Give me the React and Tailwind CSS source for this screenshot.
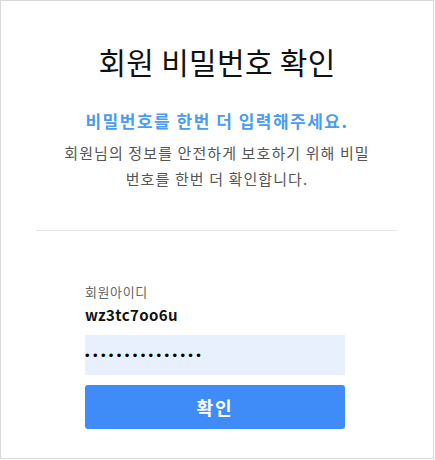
const fontStack = { fontFamily: '"Noto Sans CJK KR", "Noto Sans", sans-serif' };

export default function App() {
  return (
    <div
      className="w-[434px] h-[459px] border border-[#d9d9d9] bg-white"
      style={fontStack}
    >
      <div className="pt-[38px] text-center">
        <h1 className="text-[30px] leading-[44px] font-normal tracking-[0.3px] text-[#111]">회원 비밀번호 확인</h1>
        <p className="mt-[25px] text-[17px] leading-[26px] font-bold tracking-[1.5px] text-[#4a9cf0]">
          비밀번호를 한번 더 입력해주세요.
        </p>
        <p className="mx-auto mt-[6px] w-[316px] text-[15px] leading-[26px] tracking-[1.1px] text-[#555]">
          회원님의 정보를 안전하게 보호하기 위해 비밀번호를 한번 더 확인합니다.
        </p>
      </div>

      <div className="mx-[35px] mt-[38px] border-t border-[#e6e6e6]" />

      <form className="ml-[84px] mt-[51px] w-[260px]" onSubmit={(e) => e.preventDefault()}>
        <label className="block text-[13px] leading-[20px] tracking-[0.6px] text-[#666]">회원아이디</label>
        <div className="mt-[2px] text-[15px] leading-[22px] font-bold tracking-[0.4px] text-[#111]">wz3tc7oo6u</div>
        <input
          type="password"
          defaultValue="abcdefghijklmno"
          className="mt-[9px] block h-[40px] w-full bg-[#e8f0fe] text-[13px] tracking-[3.4px] text-black outline-none"
          style={{ fontFamily: '"Liberation Sans", sans-serif' }}
        />
        <button
          type="submit"
          className="mt-[10px] h-[44px] w-full rounded-[3px] bg-[#3f8cf8] text-[18px] font-bold tracking-[2px] text-white"
        >
          확인
        </button>
      </form>
    </div>
  );
}
